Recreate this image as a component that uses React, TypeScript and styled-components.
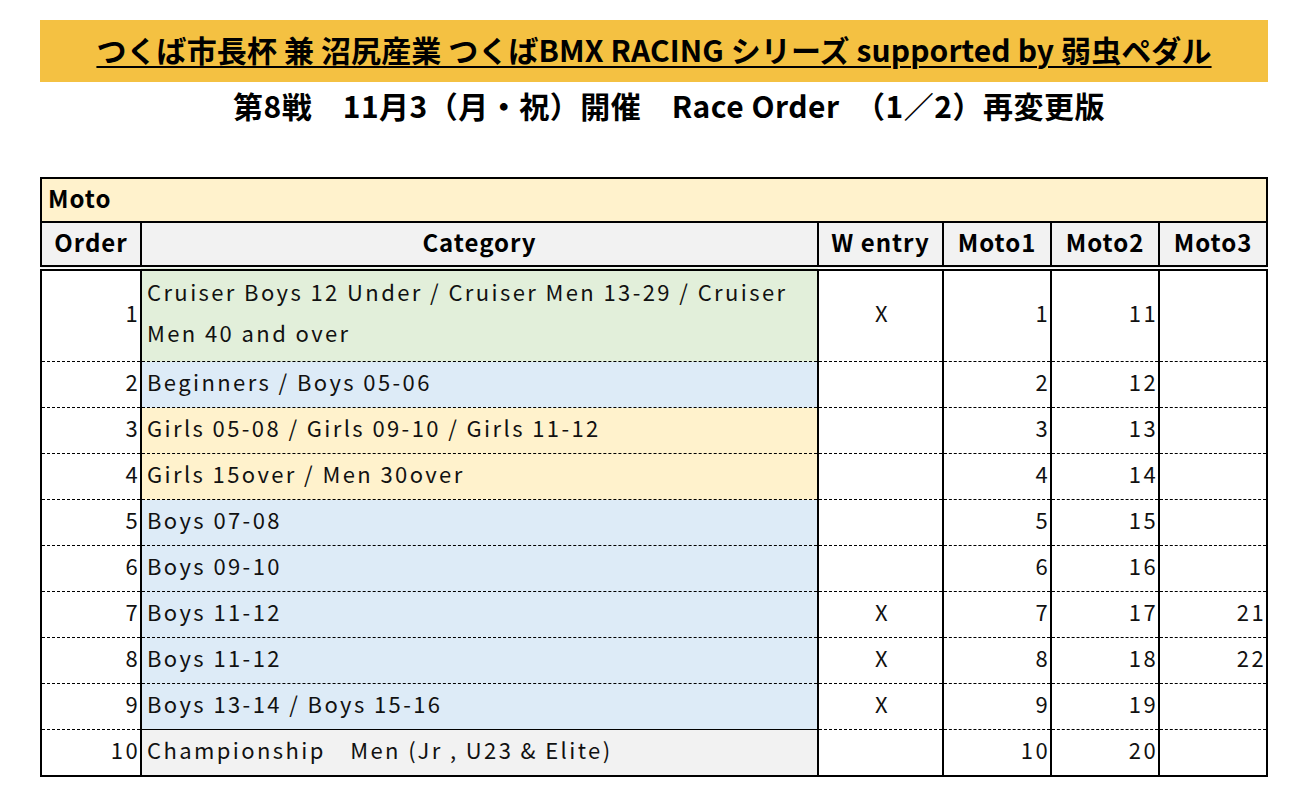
import React from "react";
import styled, { createGlobalStyle } from "styled-components";

const Global = createGlobalStyle`
  html, body { margin: 0; padding: 0; background: #ffffff; }
  body { font-family: "Noto Sans CJK JP", "Noto Sans", sans-serif; color: #000; }
`;

const Page = styled.div`
  width: 1228px;
  padding: 20px 0 0 40px;
`;

const Banner = styled.div`
  height: 62px;
  background: #f4c142;
  display: flex;
  align-items: center;
  justify-content: center;
`;

const Title = styled.h1`
  margin: 0;
  padding-bottom: 4px;
  font-family: "Noto Sans CJK JP", sans-serif;
  font-size: 30px;
  font-weight: 700;
  letter-spacing: 0.1px;
  line-height: 40px;
  text-decoration: underline;
  text-decoration-thickness: 2px;
  text-underline-offset: 4px;
  white-space: nowrap;
`;

const Subtitle = styled.h2`
  margin: 0;
  height: 50px;
  padding: 0 0 4px 30px;
  box-sizing: border-box;
  display: flex;
  align-items: center;
  justify-content: center;
  font-family: "Noto Sans CJK JP", sans-serif;
  font-size: 30px;
  font-weight: 700;
  letter-spacing: 0.5px;
  white-space: pre;
`;

const Table = styled.table`
  margin-top: 45px;
  width: 1228px;
  border-collapse: collapse;
  table-layout: fixed;
  border: 2px solid #000;
  font-family: "Noto Sans CJK JP", sans-serif;
`;

const SectionCell = styled.td`
  height: 37px;
  padding: 0 6px 5px;
  background: #fff2cc;
  border-bottom: 2px solid #000;
  font-size: 24px;
  font-weight: 700;
  letter-spacing: 1px;
  line-height: 36px;
  text-align: left;
`;

const HeadCell = styled.th`
  height: 38px;
  padding: 0 0 4px;
  background: #f2f2f2;
  border-left: 2px solid #000;
  border-bottom: 6px double #000;
  font-size: 24px;
  font-weight: 700;
  letter-spacing: 1px;
  line-height: 36px;
  text-align: center;
`;

type Tone = "green" | "blue" | "yellow" | "gray" | "none";

const toneColor: Record<Tone, string> = {
  green: "#e2efda",
  blue: "#ddebf7",
  yellow: "#fff2cc",
  gray: "#f2f2f2",
  none: "#ffffff",
};

const Cell = styled.td<{ $align?: "left" | "right" | "center"; $tone?: Tone; $solidTop?: boolean; $tall?: boolean }>`
  height: ${(p) => (p.$tall ? "82px" : "37px")};
  padding: ${(p) => (p.$align === "left" ? "0 2px 8px 5px" : p.$align === "center" ? "0 0 8px 4px" : "0 0 8px 0")};
  background: ${(p) => toneColor[p.$tone ?? "none"]};
  border-left: 2px solid #000;
  border-top: 1px ${(p) => (p.$solidTop ? "solid" : "dashed")} #000;
  font-size: 22px;
  font-weight: 400;
  letter-spacing: 2.4px;
  line-height: ${(p) => (p.$tall ? "41px" : "36px")};
  text-align: ${(p) => p.$align ?? "right"};
  vertical-align: middle;
  color: #111;
`;

type Row = {
  order: number;
  category: string;
  tone: Tone;
  w: boolean;
  m1: string;
  m2: string;
  m3: string;
};

const rows: Row[] = [
  { order: 1, category: "Cruiser Boys 12 Under / Cruiser Men 13-29 / Cruiser Men 40 and over", tone: "green", w: true, m1: "1", m2: "11", m3: "" },
  { order: 2, category: "Beginners / Boys 05-06", tone: "blue", w: false, m1: "2", m2: "12", m3: "" },
  { order: 3, category: "Girls 05-08 / Girls 09-10 / Girls 11-12", tone: "yellow", w: false, m1: "3", m2: "13", m3: "" },
  { order: 4, category: "Girls 15over / Men 30over", tone: "yellow", w: false, m1: "4", m2: "14", m3: "" },
  { order: 5, category: "Boys 07-08", tone: "blue", w: false, m1: "5", m2: "15", m3: "" },
  { order: 6, category: "Boys 09-10", tone: "blue", w: false, m1: "6", m2: "16", m3: "" },
  { order: 7, category: "Boys 11-12", tone: "blue", w: true, m1: "7", m2: "17", m3: "21" },
  { order: 8, category: "Boys 11-12", tone: "blue", w: true, m1: "8", m2: "18", m3: "22" },
  { order: 9, category: "Boys 13-14 / Boys 15-16", tone: "blue", w: true, m1: "9", m2: "19", m3: "" },
  { order: 10, category: "Championship\u3000Men (Jr , U23 & Elite)", tone: "gray", w: false, m1: "10", m2: "20", m3: "" },
];

export default function App() {
  return (
    <>
      <Global />
      <Page>
        <Banner>
          <Title>つくば市長杯 兼 沼尻産業 つくばBMX RACING シリーズ supported by 弱虫ペダル</Title>
        </Banner>
        <Subtitle>{"第8戦\u300011月3（月・祝）開催\u3000Race Order\u3000（1／2）再変更版"}</Subtitle>
        <Table>
          <colgroup>
            <col style={{ width: 100 }} />
            <col style={{ width: 677 }} />
            <col style={{ width: 125 }} />
            <col style={{ width: 108 }} />
            <col style={{ width: 108 }} />
            <col style={{ width: 108 }} />
          </colgroup>
          <thead>
            <tr>
              <SectionCell colSpan={6}>Moto</SectionCell>
            </tr>
            <tr>
              <HeadCell>Order</HeadCell>
              <HeadCell>Category</HeadCell>
              <HeadCell>W entry</HeadCell>
              <HeadCell>Moto1</HeadCell>
              <HeadCell>Moto2</HeadCell>
              <HeadCell>Moto3</HeadCell>
            </tr>
          </thead>
          <tbody>
            {rows.map((r, i) => {
              const tall = i === 0;
              return (
                <tr key={r.order}>
                  <Cell $tall={tall}>{r.order}</Cell>
                  <Cell $tall={tall} $align="left" $tone={r.tone} $solidTop={r.tone === "gray"}>
                    {r.category}
                  </Cell>
                  <Cell $tall={tall} $align="center">{r.w ? "X" : ""}</Cell>
                  <Cell $tall={tall}>{r.m1}</Cell>
                  <Cell $tall={tall}>{r.m2}</Cell>
                  <Cell $tall={tall}>{r.m3}</Cell>
                </tr>
              );
            })}
          </tbody>
        </Table>
      </Page>
    </>
  );
}
